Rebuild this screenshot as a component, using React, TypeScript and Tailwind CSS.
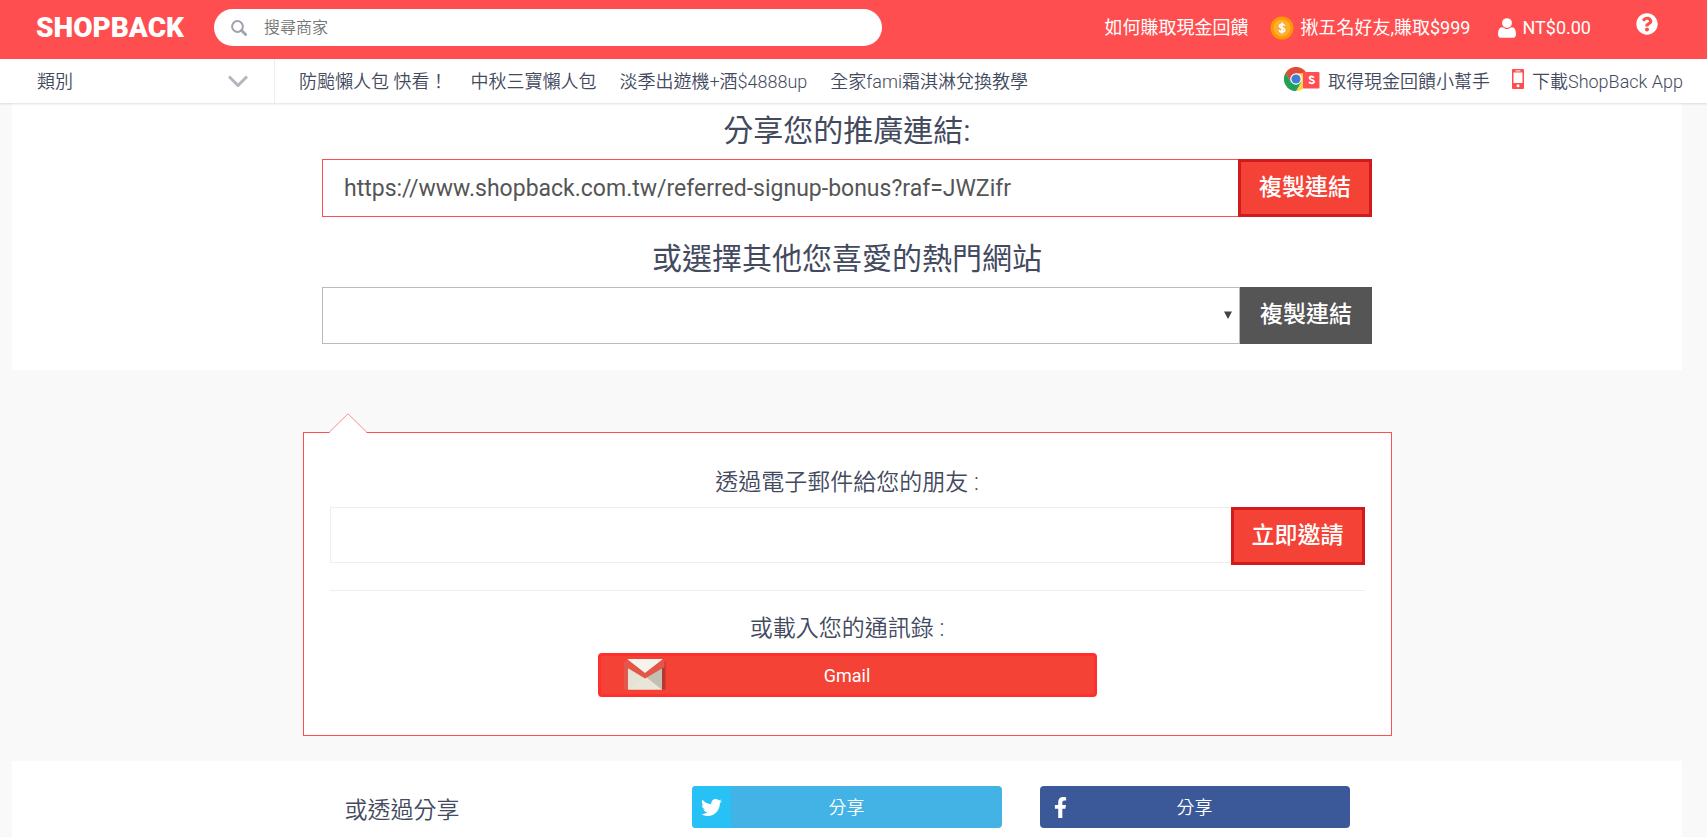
import { ReactNode } from "react"
import { FaFacebookF, FaQuestionCircle, FaTwitter } from "react-icons/fa"

const navLinks = ["防颱懶人包 快看！", "中秋三寶懶人包", "淡季出遊機+酒$4888up", "全家fami霜淇淋兌換教學"];

const SearchIcon = () => (
    <svg viewBox="0 0 16 16" className="size-4 shrink-0" fill="none" stroke="#9ea3ad">
        <circle cx="6.5" cy="6.5" r="5.4" strokeWidth="2" />
        <path d="M10.6 10.6 14.6 14.6" strokeWidth="2.8" strokeLinecap="round" />
    </svg>
)

const CoinIcon = () => (
    <svg viewBox="0 0 24 24" className="size-6 shrink-0">
        <circle cx="12" cy="12" r="11.5" fill="#ff9800" />
        <circle cx="12" cy="12" r="8.5" fill="#fbb034" />
        <path d="M12 6.6v10.8M14.6 9.8c-.3-1-1.3-1.6-2.6-1.6-1.500 0-2.500.7-2.500 1.800 0 2.700 5.200 1.200 5.200 4 0 1.200-1.100 1.900-2.700 1.900-1.500 0-2.600-.7-2.800-1.900" fill="none" stroke="#fff" strokeWidth="1.6" />
    </svg>
)

const UserIcon = () => (
    <svg viewBox="0 128 1408 1536" className="h-5 w-[18px] shrink-0" fill="#fff">
        <circle cx="704" cy="512" r="384" />
        <path d="M1408 1405q0 120-73 189.500t-194 69.500h-874q-121 0-194-69.500t-73-189.500q0-53 3.500-103.500t14-109 26.500-108.500 43-97.500 62-81 85.500-53.500 111.500-20q9 0 42 21.500t74.500 48 108 48 133.500 21.500 133.500-21.500 108-48 74.500-48 42-21.500q61 0 111.500 20t85.500 53.500 62 81 43 97.500 26.500 108.500 14 109 3.500 103.500z" />
    </svg>
)

const ChromeIcon = () => (
    <svg viewBox="0 0 36 24" className="mb-1 h-6 w-9 shrink-0">
        <circle cx="12" cy="12" r="12" fill="#fdd549" />
        <path d="M22.400 6A12 12 0 0 0 1.600 6L6.800 15 12 6.500Z" fill="#de4a3d" />
        <path d="M1.600 6A12 12 0 0 0 12 24L17.200 15 6.800 15Z" fill="#1fa15d" />
        <circle cx="12" cy="12" r="5.800" fill="#fff" />
        <circle cx="12" cy="12" r="4.600" fill="#3f7fd0" />
        <rect x="19" y="5" width="16.500" height="16.500" rx="1" fill="#ff4f55" />
        <path d="M29.800 10.800c-.3-.8-1.100-1.300-2.200-1.300-1.200 0-2.100.6-2.100 1.600 0 2.300 4.500 1.100 4.500 3.500 0 1.100-1 1.800-2.300 1.800s-2.200-.6-2.500-1.600" fill="none" stroke="#fff" strokeWidth="1.800" />
    </svg>
)

const PhoneIcon = () => (
    <svg viewBox="0 0 12 20" className="mb-1 h-5 w-3 shrink-0">
        <rect width="12" height="20" rx="1" fill="#ff4c4f" />
        <rect x="1.500" y="3.500" width="9" height="10.500" fill="#fff" />
        <rect x="3.500" y="1.400" width="5" height="1" fill="#fff" />
        <circle cx="6" cy="16.800" r="1.500" fill="#fff" />
    </svg>
)

const GmailIcon = () => (
    <svg viewBox="0 0 42 32" className="h-8 w-[42px]">
        <path d="M38 4h3.500v27.500H38z" fill="#b8372d" />
        <path d="M0 4h4v27.500H0z" fill="#e2584c" />
        <path d="M4 1h34v30.500H4z" fill="#e6e2d4" />
        <path d="M38 9v22.500L21 20Z" fill="#b9b6a9" />
        <path d="M4 31.500 21 18l17 13.500Z" fill="#e9e5d8" />
        <path d="M21 18 38 31.500V10Z" fill="#c3bfb1" />
        <path d="M3 1h36L21 15Z" fill="#f6f3ec" />
        <path d="M3 1 21 15 39 1l1.500 4v4L21 20.500 2 9V4Z" fill="#e5564a" />
    </svg>
)

const Title = ({ children, id }: { children: ReactNode, id: string }) => (
    <label htmlFor={id} className="text-center text-[30px] leading-[56px]">{children}</label>
)

const RedButton = ({ children }: { children: ReactNode }) => (
    <button className="h-[58px] w-[134px] shrink-0 border-3 border-[#d11a1b] bg-[#f44336] text-[23px] font-medium text-white">
        {children}
    </button>
)

const Header = () => (
    <header className="flex h-[59px] items-center bg-[#ff4e4f] pr-[49px] pl-9 text-[18px] whitespace-nowrap text-white">
        <a href="#" className="mb-1 w-[178px] shrink-0 text-[28px] leading-8 font-black">SHOPBACK</a>
        <label className="mb-1 flex h-[37px] w-[668px] items-center gap-[17px] rounded-full bg-white px-[17px]">
            <SearchIcon />
            <input type="search" placeholder="搜尋商家" aria-label="搜尋商家" className="w-full text-base font-[350] text-[#444] outline-none placeholder:text-[#757575]" />
        </label>
        <nav className="mb-1 ml-auto flex items-center">
            <a href="#">如何賺取現金回饋</a>
            <a href="#" className="ml-[22px] flex items-center gap-1.5"><CoinIcon />揪五名好友,賺取$999</a>
            <a href="#" className="ml-7 flex items-center gap-1.5"><UserIcon />NT$0.00</a>
            <a href="#" aria-label="help" className="mb-2 ml-[45px]"><FaQuestionCircle className="size-[22px]" /></a>
        </nav>
    </header>
)

const SubNav = () => (
    <div className="z-10 flex h-11 items-center bg-white pr-6 text-[18px] font-[350] whitespace-nowrap shadow-[0_1px_2px_rgba(0,0,0,0.12)]">
        <button className="flex h-full w-[275px] shrink-0 items-center justify-between border-r border-[#eee] pr-[26px] pl-[37px]">
            類別
            <svg viewBox="0 0 20 12" className="h-3 w-5" fill="none" stroke="#b3b6be" strokeWidth="3">
                <path d="M1 1.500 10 10.500 19 1.500" />
            </svg>
        </button>
        <nav className="flex gap-[23px] pl-6">
            {navLinks.map((link) => <a href="#" key={link}>{link}</a>)}
        </nav>
        <div className="ml-auto flex items-center gap-[22px]">
            <a href="#" className="flex items-center gap-2"><ChromeIcon />取得現金回饋小幫手</a>
            <a href="#" className="flex items-center gap-2"><PhoneIcon />下載ShopBack App</a>
        </div>
    </div>
)

const LinkPanel = () => (
    <section className="flex justify-center bg-white pb-[26px]">
        <div className="flex w-full max-w-[1050px] flex-col">
            <Title id="link">分享您的推廣連結:</Title>
            <div className="flex">
                <input id="link" readOnly defaultValue="https://www.shopback.com.tw/referred-signup-bonus?raf=JWZifr" className="h-[58px] min-w-0 flex-1 border border-r-0 border-[#ff4e4f] px-[21px] text-[23px] text-[#555] outline-none" />
                <RedButton>複製連結</RedButton>
            </div>
            <div className="h-3.5" />
            <Title id="site">或選擇其他您喜愛的熱門網站</Title>
            <div className="flex">
                <div className="relative flex-1">
                    <select id="site" className="h-[57px] w-full appearance-none border border-[#bbb] bg-white outline-none" />
                    <svg viewBox="0 0 8 8" className="pointer-events-none absolute top-6 right-2 size-2" fill="#444">
                        <path d="M0 .5h8L4 8Z" />
                    </svg>
                </div>
                <button className="h-[57px] w-[132px] bg-[#555] text-[23px] font-medium text-white">複製連結</button>
            </div>
        </div>
    </section>
)

const EmailCard = () => (
    <section className="relative mx-auto mt-[62px] mb-[25px] flex w-full max-w-[1089px] flex-col items-center border border-[#ff4e4f] bg-white px-[26px] pt-[30px] pb-[38px] text-[23px] font-[350]">
        {/* pointer on top of the card */}
        <svg viewBox="0 0 38 20" className="absolute -top-5 left-[25px] h-5 w-[38px]">
            <path d="M0 20 19 .8 38 20Z" fill="#fff" />
            <path d="M0 19.500 19 .8 38 19.500" fill="none" stroke="#ff8a8b" />
        </svg>
        <label htmlFor="email" className="mb-1 leading-10">透過電子郵件給您的朋友 :</label>
        <div className="flex w-full">
            <input id="email" className="h-[56px] min-w-0 flex-1 border border-r-0 border-[#eee] px-[21px] outline-none" />
            <RedButton>立即邀請</RedButton>
        </div>
        <hr className="mt-[25px] mb-[18px] w-full border-[#eee]" />
        <h3 className="mb-1 leading-10">或載入您的通訊錄 :</h3>
        <button className="relative h-11 w-[499px] rounded border-3 border-[#ff2f2f] bg-[#f44336] text-[18px] font-normal text-white">
            <span className="absolute top-0.5 left-[23px]"><GmailIcon /></span>
            Gmail
        </button>
    </section>
)

const SharePanel = () => (
    <section className="flex flex-1 justify-center bg-white pt-[25px] pb-2">
        <div className="flex w-full max-w-[1005px] items-start">
            <h3 className="flex-1 text-[23px] leading-[50px] font-[350]">或透過分享</h3>
            <div className="flex gap-[38px] text-[18px] font-[350] text-white">
                <button className="relative h-[42px] w-[310px] rounded bg-[#43b3e5]">
                    <span className="absolute inset-y-0 left-0 flex w-[39px] items-center justify-center rounded-l bg-[#28c1f6]">
                        <FaTwitter className="size-[21px]" />
                    </span>
                    分享
                </button>
                <button className="relative h-[42px] w-[310px] rounded bg-[#3b5998]">
                    <span className="absolute inset-y-0 left-0 flex w-[41px] items-center justify-center">
                        <FaFacebookF className="size-[21px]" />
                    </span>
                    分享
                </button>
            </div>
        </div>
    </section>
)

const App = () => (
    <div className="flex min-h-screen flex-col bg-[#f9f9f9] font-[Roboto,'Noto_Sans_CJK_TC',sans-serif] text-[#434a5e]">
        <Header />
        <SubNav />
        <main className="mr-[25px] ml-3 flex flex-1 flex-col">
            <LinkPanel />
            <EmailCard />
            <SharePanel />
        </main>
    </div>
)

export default App
